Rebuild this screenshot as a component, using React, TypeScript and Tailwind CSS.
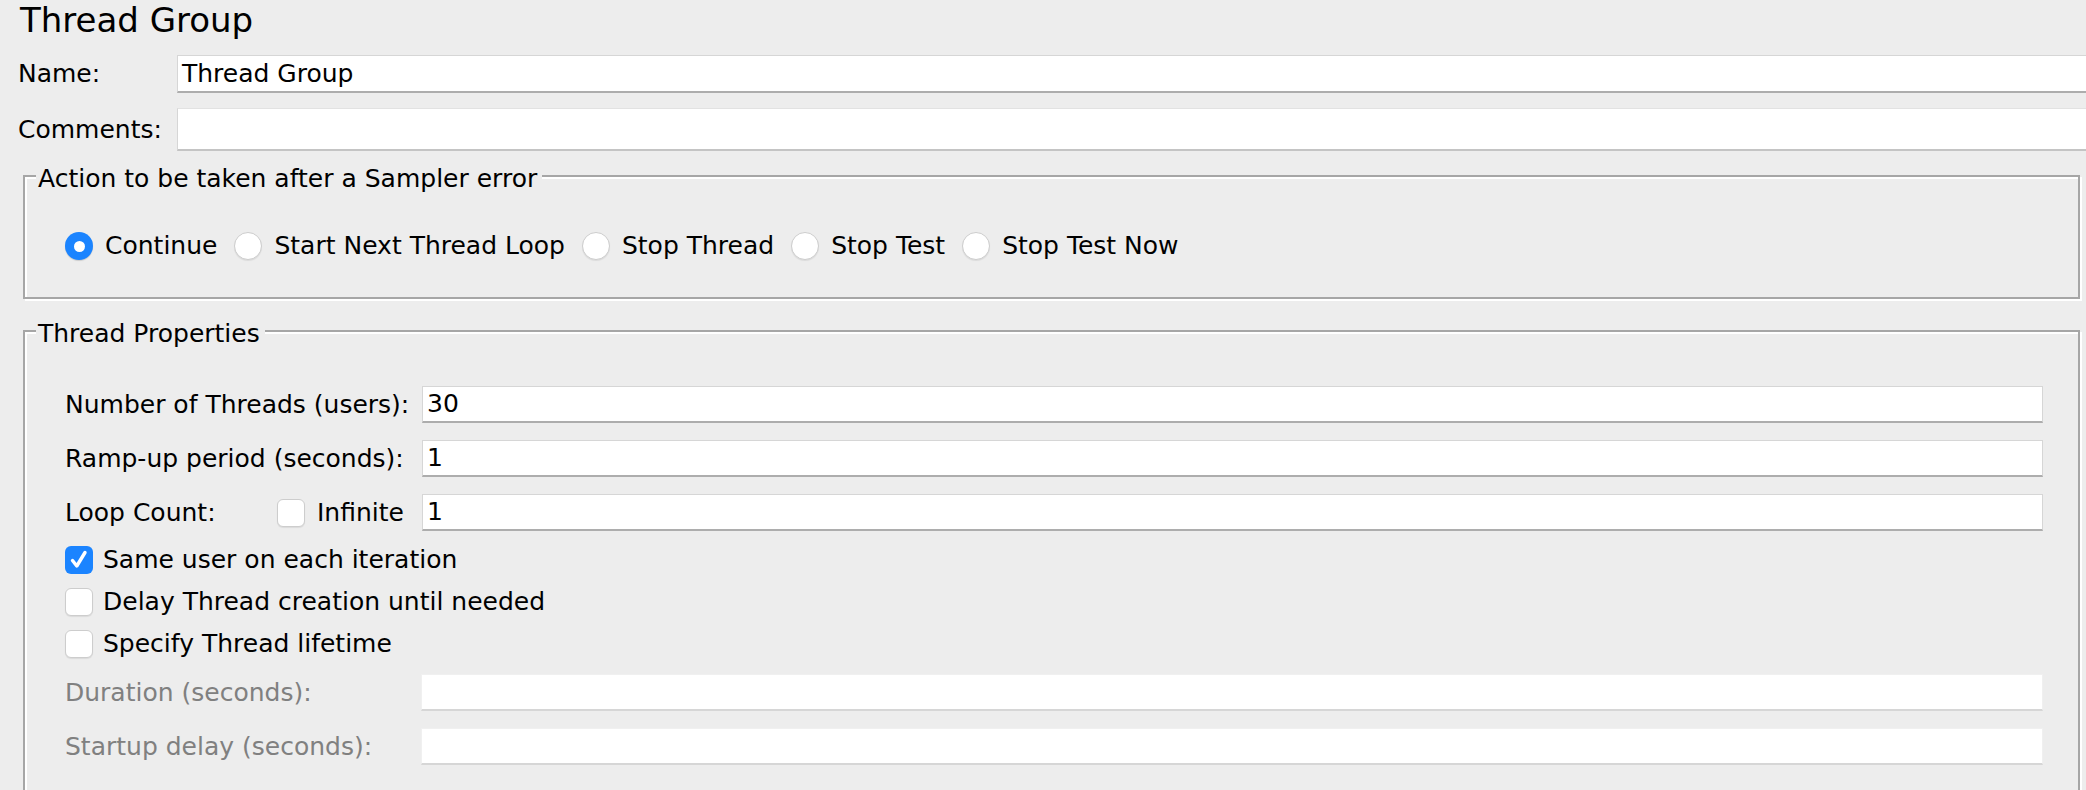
import React from 'react'

function Field({ value = '', disabled = false, className = '' }: { value?: string; disabled?: boolean; className?: string }) {
  return (
    <div
      className={`flex items-center pl-[4px] text-[25px] leading-[30px] ${
        disabled
          ? 'bg-white border border-[#f0f0f0] border-b-[#d6d6d6] border-b-2'
          : 'bg-white border border-[#d6d6d6] border-b-[#adadad] border-b-2'
      } ${className}`}
    >
      {value}
    </div>
  )
}

function Radio({ checked = false }: { checked?: boolean }) {
  if (checked) {
    return (
      <span className="flex h-[28px] w-[28px] shrink-0 items-center justify-center rounded-full bg-[#1b84ff] shadow-[0_1px_1px_rgba(0,0,0,0.15)]">
        <span className="h-[11px] w-[11px] rounded-full bg-white" />
      </span>
    )
  }
  return (
    <span className="h-[28px] w-[28px] shrink-0 rounded-full border border-[#cdcdcd] bg-white shadow-[0_1px_1px_rgba(0,0,0,0.08)]" />
  )
}

function Checkbox({ checked = false }: { checked?: boolean }) {
  if (checked) {
    return (
      <span className="flex h-[28px] w-[28px] shrink-0 items-center justify-center rounded-[6px] bg-[#1b84ff]">
        <svg viewBox="0 0 24 24" className="h-[24px] w-[24px]" fill="none" stroke="white" strokeWidth={3.4} strokeLinecap="round" strokeLinejoin="round">
          <path d="M5.5 12.5l4.3 5.5L18 4.5" />
        </svg>
      </span>
    )
  }
  return (
    <span className="h-[28px] w-[28px] shrink-0 rounded-[6px] border border-[#cdcdcd] bg-white shadow-[0_1px_1px_rgba(0,0,0,0.08)]" />
  )
}

function Group({ title, className = '', children }: { title: string; className?: string; children: React.ReactNode }) {
  return (
    <div className={`relative ml-[23px] mr-[6px] border-2 border-[#a6a6a6] shadow-[inset_2px_2px_0_#ffffff,2px_2px_0_#ffffff] ${className}`}>
      <div className="absolute -top-[13px] left-[11px] bg-[#ededed] pl-[2px] pr-[5px] leading-[30px]">{title}</div>
      {children}
    </div>
  )
}

const actions = ['Continue', 'Start Next Thread Loop', 'Stop Thread', 'Stop Test', 'Stop Test Now']

export default function App() {
  return (
    <div className="h-[790px] w-full overflow-hidden bg-[#ededed] text-[25px] leading-[30px] text-black [font-family:'DejaVu_Sans','Lucida_Grande',sans-serif]">
      <div className="pl-[20px] pt-[1px] text-[34px] leading-[38px]">Thread Group</div>

      <div className="mt-[16px] flex h-[38px] items-center">
        <span className="w-[177px] shrink-0 pl-[18px]">Name:</span>
        <Field value="Thread Group" className="h-[38px] flex-1 -mr-[4px]" />
      </div>

      <div className="mt-[15px] flex h-[43px] items-center">
        <span className="w-[177px] shrink-0 pl-[18px]">Comments:</span>
        <Field className="h-[43px] flex-1 -mr-[4px] border-t-[#e2e2e2] border-b-[#c4c4c4]" />
      </div>

      <Group title="Action to be taken after a Sampler error" className="mt-[24px] h-[124px] pl-[40px] pt-[54px]">
        <div className="flex h-[30px] items-center gap-[17px]">
          {actions.map((a, i) => (
            <label key={a} className="flex items-center gap-[12px]">
              <Radio checked={i === 0} />
              <span>{a}</span>
            </label>
          ))}
        </div>
      </Group>

      <Group title="Thread Properties" className="mt-[31px] h-[520px] pl-[40px] pr-[35px] pt-[54px]">
        <div className="flex flex-col gap-[17px]">
          <div className="flex h-[37px] items-center">
            <span className="w-[357px] shrink-0">Number of Threads (users):</span>
            <Field value="30" className="h-[37px] flex-1" />
          </div>
          <div className="flex h-[37px] items-center">
            <span className="w-[357px] shrink-0">Ramp-up period (seconds):</span>
            <Field value="1" className="h-[37px] flex-1" />
          </div>
          <div className="flex h-[37px] items-center">
            <div className="flex w-[357px] shrink-0 items-center">
              <span className="w-[212px] shrink-0">Loop Count:</span>
              <Checkbox />
              <span className="ml-[12px]">Infinite</span>
            </div>
            <Field value="1" className="h-[37px] flex-1" />
          </div>
        </div>

        <div className="mt-[14px] flex flex-col gap-[12px]">
          <label className="flex h-[30px] items-center gap-[10px]">
            <Checkbox checked />
            <span>Same user on each iteration</span>
          </label>
          <label className="flex h-[30px] items-center gap-[10px]">
            <Checkbox />
            <span>Delay Thread creation until needed</span>
          </label>
          <label className="flex h-[30px] items-center gap-[10px]">
            <Checkbox />
            <span>Specify Thread lifetime</span>
          </label>
        </div>

        <div className="mt-[15px] flex flex-col gap-[17px] text-[#808080]">
          <div className="flex h-[37px] items-center">
            <span className="w-[356px] shrink-0">Duration (seconds):</span>
            <Field disabled className="h-[37px] flex-1" />
          </div>
          <div className="flex h-[37px] items-center">
            <span className="w-[356px] shrink-0">Startup delay (seconds):</span>
            <Field disabled className="h-[37px] flex-1" />
          </div>
        </div>
      </Group>
    </div>
  )
}
